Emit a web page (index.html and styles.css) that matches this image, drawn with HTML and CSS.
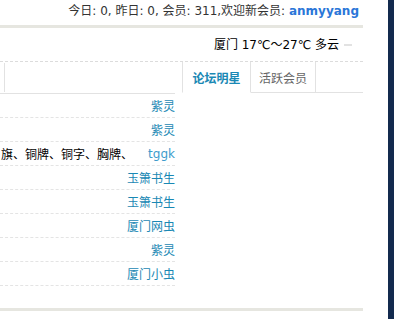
FILE: index.html
```html
<!DOCTYPE html>
<html lang="zh-CN">
<head>
    <meta charset="UTF-8">
    <title>论坛</title>
    <link rel="stylesheet" href="styles.css">
</head>
<body>
<div class="page">
    <div class="main">
        <div class="stats">今日: 0, 昨日: 0, 会员: 311,欢迎新会员: <a class="newuser" href="#">anmyyang</a></div>
        <div class="bar"></div>
        <div class="weather">厦门 17℃～27℃ 多云 <span class="dash"></span></div>
        <div class="board">
            <div class="left">
                <div class="lhead"><div class="ltab"></div></div>
                <ul class="topics">
                    <li><a href="#">紫灵</a></li>
                    <li><a href="#">紫灵</a></li>
                    <li><span class="title">旗、铜牌、铜字、胸牌、</span><a class="en" href="#">tggk</a></li>
                    <li><a href="#">玉箫书生</a></li>
                    <li><a href="#">玉箫书生</a></li>
                    <li><a href="#">厦门网虫</a></li>
                    <li><a href="#">紫灵</a></li>
                    <li><a href="#">厦门小虫</a></li>
                </ul>
            </div>
            <div class="right">
                <div class="tabs">
                    <div class="tab on">论坛明星</div>
                    <div class="tab">活跃会员</div>
                    <div class="tabfill"></div>
                </div>
            </div>
        </div>
        <div class="bar bottom"></div>
    </div>
    <div class="edge"></div>
</div>
</body>
</html>
```

FILE: styles.css
```css
body {
    margin: 0;
    background: #fff;
    font-family: "DejaVu Sans", "Noto Sans CJK SC", sans-serif;
    font-size: 12px;
    color: #000;
}
a {
    text-decoration: none;
}
.page {
    display: flex;
    height: 319px;
    overflow: hidden;
}
.main {
    width: 388px;
}
.edge {
    width: 6px;
    background: #132a4e;
}
.stats {
    width: 359px;
    height: 25px;
    line-height: 22px;
    text-align: right;
    color: #333;
    white-space: nowrap;
}
.newuser {
    color: #2a76d8;
    font-weight: bold;
}
.bar {
    width: 363px;
    height: 3px;
    background: #e6e6e0;
}
.bar.bottom {
    margin-top: 22px;
}
.weather {
    width: 363px;
    height: 34px;
    line-height: 36px;
    text-align: right;
    border-bottom: 1px dashed #dcdcdc;
    box-sizing: border-box;
    display: flex;
    justify-content: flex-end;
    align-items: center;
    gap: 5px;
}
.dash {
    display: inline-block;
    width: 8px;
    height: 2px;
    background: #e2e2e2;
    margin-right: 11px;
}
.board {
    display: flex;
    width: 363px;
}
.left {
    width: 175px;
}
.lhead {
    height: 30px;
    border-bottom: 1px solid #e2e2e2;
    padding-left: 4px;
    padding-top: 1px;
}
.ltab {
    height: 29px;
    border-left: 1px solid #e2e2e2;
}
.topics {
    list-style: none;
    margin: 0;
    padding: 0;
}
.topics li {
    height: 23px;
    line-height: 24px;
    border-bottom: 1px dashed #e4e4e4;
    display: flex;
    justify-content: flex-end;
    white-space: nowrap;
}
.topics a {
    color: #1a88b4;
    font-family: "Noto Sans CJK SC", sans-serif;
}
.topics a.en {
    color: #3d9ccc;
    font-family: "DejaVu Sans", sans-serif;
    margin-left: auto;
}
.topics .title {
    font-family: "Noto Sans CJK SC", sans-serif;
    padding-left: 1px;
}
.right {
    flex: 1;
    margin-left: 7px;
}
.tabs {
    display: flex;
    height: 31px;
}
.tab {
    font-family: "Noto Sans CJK SC", sans-serif;
    line-height: 31px;
    text-align: center;
    color: #666;
    border-right: 1px solid #e2e2e2;
    border-bottom: 1px solid #e2e2e2;
    box-sizing: border-box;
    width: 65px;
}
.tab.on {
    width: 69px;
    color: #1a88b4;
    font-weight: bold;
    border-left: 1px solid #e2e2e2;
    border-bottom-color: #fff;
}
.tabfill {
    flex: 1;
    border-bottom: 1px solid #e2e2e2;
}
```
